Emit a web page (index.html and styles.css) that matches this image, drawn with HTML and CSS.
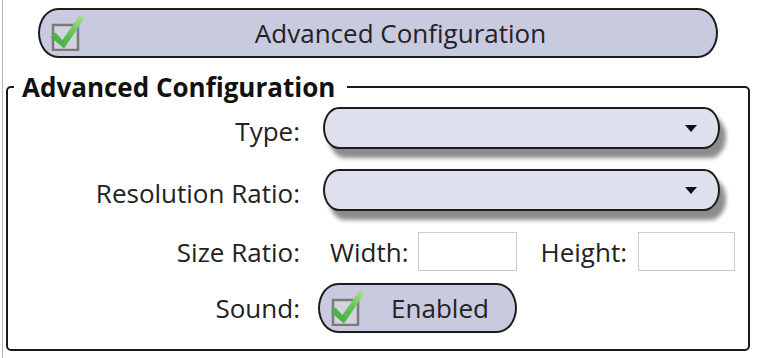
FILE: index.html
```html
<!DOCTYPE html>
<html lang="en">
<head>
    <meta charset="UTF-8">
    <title>Advanced Configuration</title>
    <link rel="stylesheet" href="styles.css">
</head>
<body>
    <div class="window">

        <!-- boton principal con check -->
        <button class="toggle toggle-wide" type="button">
            <svg class="check" width="36" height="38" viewBox="0 0 36 38">
                <defs>
                    <linearGradient id="g1" x1="0" y1="1" x2="1" y2="0">
                        <stop offset="0" stop-color="#3aa83a"/>
                        <stop offset="0.55" stop-color="#62c453"/>
                        <stop offset="1" stop-color="#b3e08c"/>
                    </linearGradient>
                </defs>
                <rect x="4" y="12" width="25" height="25" fill="#d2d3de" stroke="#7a7a7a" stroke-width="2.5"/>
                <path d="M1.5 24 L6.5 19.5 L13.5 27 L30.5 2.5 L35.5 5.5 L15 35.5 Z" fill="url(#g1)"/>
            </svg>
            <span class="toggle-text">Advanced Configuration</span>
        </button>

        <fieldset class="group">
            <legend>Advanced Configuration</legend>

            <div class="row row-type">
                <label class="label label-combo">Type:</label>
                <div class="combo"><span class="arrow"></span></div>
            </div>

            <div class="row row-res">
                <label class="label label-combo">Resolution Ratio:</label>
                <div class="combo"><span class="arrow"></span></div>
            </div>

            <div class="row row-size">
                <label class="label">Size Ratio:</label>
                <div class="size">
                    <span class="sub-label">Width:</span>
                    <input class="textbox tb-width" type="text">
                    <span class="sub-label sub-height">Height:</span>
                    <input class="textbox tb-height" type="text">
                </div>
            </div>

            <div class="row row-sound">
                <label class="label">Sound:</label>
                <div>
                    <button class="toggle toggle-small" type="button">
                        <svg class="check" width="36" height="38" viewBox="0 0 36 38">
                            <defs>
                                <linearGradient id="g2" x1="0" y1="1" x2="1" y2="0">
                                    <stop offset="0" stop-color="#3aa83a"/>
                                    <stop offset="0.55" stop-color="#62c453"/>
                                    <stop offset="1" stop-color="#b3e08c"/>
                                </linearGradient>
                            </defs>
                            <rect x="4" y="12" width="25" height="25" fill="#d2d3de" stroke="#7a7a7a" stroke-width="2.5"/>
                            <path d="M1.5 24 L6.5 19.5 L13.5 27 L30.5 2.5 L35.5 5.5 L15 35.5 Z" fill="url(#g2)"/>
                        </svg>
                        <span class="toggle-text">Enabled</span>
                    </button>
                </div>
            </div>
        </fieldset>
    </div>
</body>
</html>
```

FILE: styles.css
```css
body {
    margin: 0;
    padding: 0;
    background: #fff;
    font-family: "Open Sans", "Noto Sans", sans-serif;
    font-size: 26px;
    color: #222;
}

.window {
    margin-left: 2px;
    height: 358px;
    border-left: 1px solid #b4b4b4;
    box-sizing: border-box;
    padding-top: 8px;
}

/* botones tipo pildora */
.toggle {
    display: flex;
    align-items: center;
    box-sizing: border-box;
    padding: 0 0 0 9px;
    background: #c8cae0;
    border: 2px solid #1c1c1c;
    border-radius: 20px / 50%;
    font-family: inherit;
    font-size: 26px;
    color: #222;
}

.toggle-wide {
    margin-left: 35px;
    width: 680px;
    height: 50px;
}

.toggle-small {
    margin-left: 2px;
    width: 199px;
    height: 50px;
}

.toggle .check {
    flex: none;
    margin-top: -2px;
}

.toggle-text {
    flex: 1;
    text-align: center;
}

/* caja de grupo */
.group {
    margin: 14px 0 0 3px;
    width: 744px;
    height: 279px;
    box-sizing: border-box;
    padding: 0;
    border: 2px solid #1a1a1a;
    border-radius: 5px;
}

.group legend {
    margin-left: 6px;
    padding: 0 12px 0 8px;
    font-weight: bold;
    color: #111;
    line-height: 30px;
}

.row {
    display: grid;
    grid-template-columns: 292px 1fr;
    column-gap: 16px;
    align-items: center;
}

.label {
    text-align: right;
}

.label-combo {
    padding-top: 6px;
}

.row-type {
    margin-top: 5px;
}

.row-res {
    margin-top: 20px;
}

.row-size {
    margin-top: 21px;
}

.row-sound {
    margin-top: 12px;
}

.combo {
    display: flex;
    align-items: center;
    justify-content: flex-end;
    box-sizing: border-box;
    margin-left: 7px;
    width: 397px;
    height: 42px;
    padding-right: 21px;
    background: #dfe0ee;
    border: 2px solid #1c1c1c;
    border-radius: 16px / 50%;
    box-shadow: 6px 9px 4px rgba(0, 0, 0, 0.45);
}

.arrow {
    width: 0;
    height: 0;
    border-left: 6px solid transparent;
    border-right: 6px solid transparent;
    border-top: 7px solid #111;
}

.size {
    display: flex;
    align-items: center;
}

.sub-label {
    margin-left: 14px;
    margin-right: 9px;
}

.sub-height {
    margin-left: 24px;
    margin-right: 11px;
}

.textbox {
    box-sizing: border-box;
    height: 39px;
    margin: 0;
    border: 1px solid #cbcbcb;
    background: #fff;
}

.tb-width {
    width: 99px;
}

.tb-height {
    width: 97px;
}
```
